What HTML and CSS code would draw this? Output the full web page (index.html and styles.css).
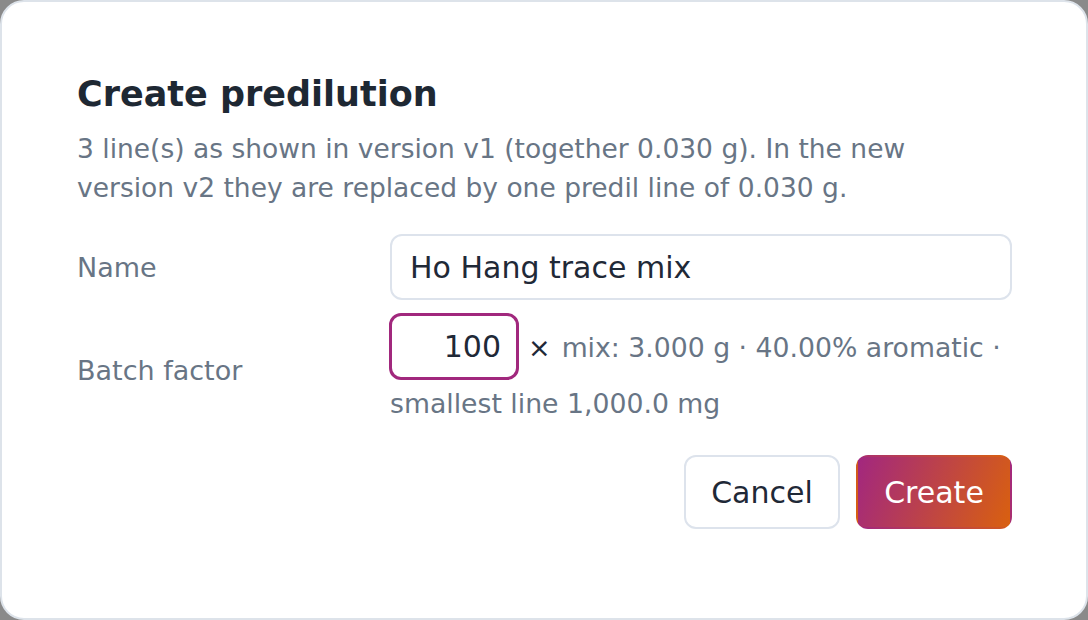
FILE: index.html
```html
<!DOCTYPE html>
<html lang="en">
<head>
    <meta charset="UTF-8">
    <meta name="viewport" content="width=device-width, initial-scale=1.0">
    <title>Create predilution</title>
    <link rel="stylesheet" href="styles.css">
</head>
<body>
    <div class="dialog">
        <h2 class="dialog-title">Create predilution</h2>
        <p class="dialog-desc">3 line(s) as shown in version v1 (together 0.030 g). In the new version v2 they are replaced by one predil line of 0.030 g.</p>

        <div class="form-grid">
            <label class="field-label" for="predil-name">Name</label>
            <input class="text-input" id="predil-name" type="text" value="Ho Hang trace mix">

            <label class="field-label" for="batch-factor">Batch factor</label>
            <div class="batch-field"><input class="text-input factor-input" id="batch-factor" type="text" value="100"><span class="times">×</span><span class="hint">mix: 3.000 g · 40.00% aromatic · smallest line 1,000.0 mg</span></div>
        </div>

        <div class="actions">
            <button class="btn btn-cancel">Cancel</button>
            <button class="btn btn-create">Create</button>
        </div>
    </div>
</body>
</html>
```

FILE: styles.css
```css
html, body {
    margin: 0;
    padding: 0;
    background-color: #8a8a8a;
}

body {
    font-family: "DejaVu Sans", "Liberation Sans", sans-serif;
    width: 1088px;
    height: 620px;
    overflow: hidden;
}

.dialog {
    box-sizing: border-box;
    width: 1088px;
    height: 620px;
    background-color: #fff;
    border: 2px solid #dde3ea;
    border-radius: 24px;
    padding: 71px 74px 0 75px;
}

.dialog-title {
    margin: 0 0 14px;
    font-size: 35px;
    line-height: 42px;
    font-weight: bold;
    color: #1e2833;
}

.dialog-desc {
    margin: 0 0 27px;
    max-width: 880px;
    font-size: 26.5px;
    line-height: 39px;
    color: #687585;
}

.form-grid {
    display: grid;
    grid-template-columns: 313px 1fr;
    row-gap: 13px;
    align-items: center;
}

.field-label {
    font-size: 27px;
    color: #687585;
}

.text-input {
    box-sizing: border-box;
    width: 100%;
    height: 66px;
    padding: 0 18px;
    border: 2px solid #dde3ec;
    border-radius: 12px;
    font-family: inherit;
    font-size: 30px;
    color: #1f2937;
    background: #fff;
    outline: none;
}

.batch-field {
    font-size: 26.7px;
    line-height: 48px;
    color: #687585;
}

.factor-input {
    width: 130px;
    height: 67px;
    padding: 0 15px;
    border: 3px solid #a1287d;
    text-align: right;
    margin-left: -1px;
}

.times {
    margin: 0 11px 0 9px;
    font-size: 27px;
    color: #1f2937;
}

.actions {
    display: flex;
    justify-content: flex-end;
    gap: 16px;
    margin-top: 27px;
}

.btn {
    box-sizing: border-box;
    width: 156px;
    height: 74px;
    padding: 0;
    border-radius: 12px;
    font-family: inherit;
    font-size: 30px;
    cursor: pointer;
}

.btn-cancel {
    background: #fff;
    border: 2px solid #dde3ec;
    color: #1f2937;
}

.btn-create {
    border: 2px solid transparent;
    background: linear-gradient(110deg, #a2277f, #d9600f);
    color: #fff;
}
```
